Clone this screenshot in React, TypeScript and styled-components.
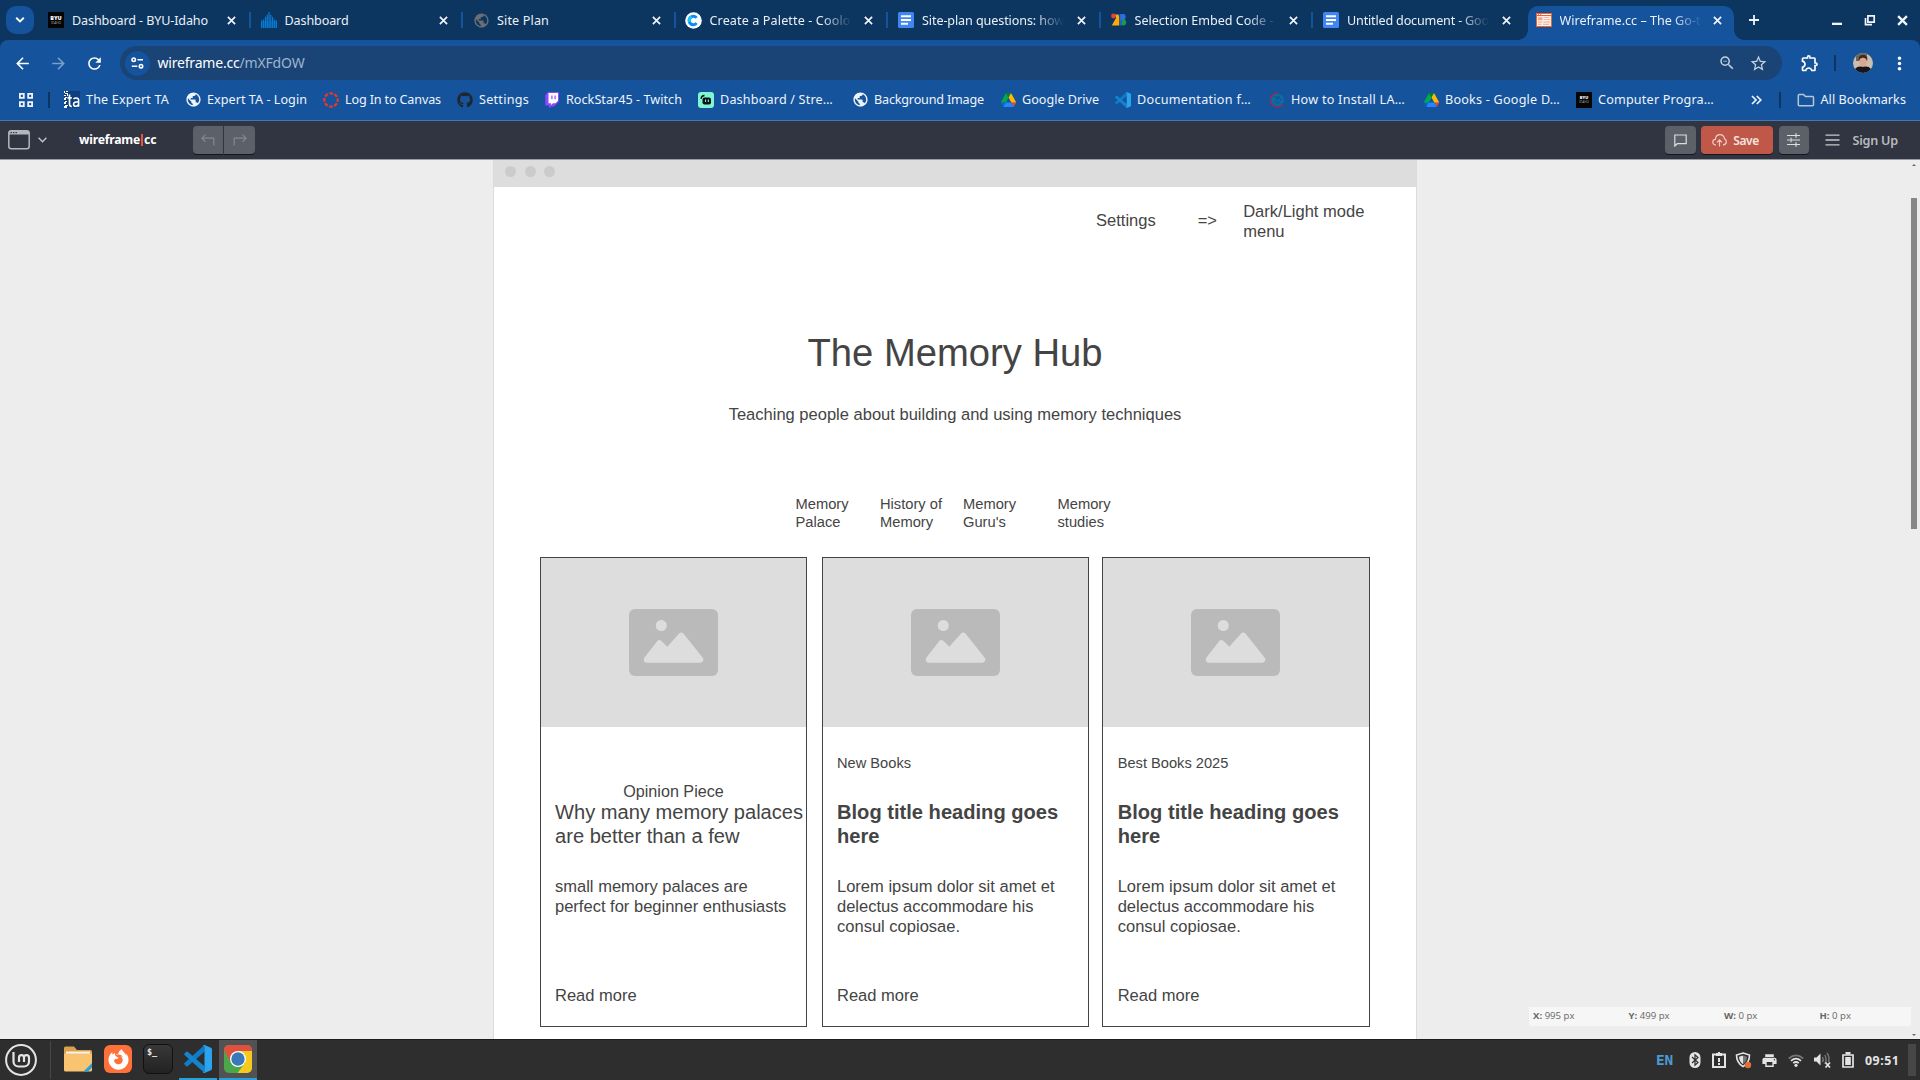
import React, { useLayoutEffect, useRef, useState } from "react";
import styled, { createGlobalStyle, css } from "styled-components";
import {
  MdArrowBack,
  MdArrowForward,
  MdRefresh,
  MdMoreVert,
  MdStarBorder,
  MdOutlineZoomOut,
  MdOutlineExtension,
  MdPublic,
  MdPrint,
} from "react-icons/md";
import { FaGithub, FaFirefoxBrowser } from "react-icons/fa";

const ui = `"Noto Sans", "Open Sans", sans-serif`;
const wire = `"Liberation Sans", Arial, sans-serif`;

const Global = createGlobalStyle`
  * { box-sizing: border-box; }
  body { margin: 0; overflow: hidden; background: #ededed; font-family: ${ui}; }
  svg { display: block; flex: none; }
`;

const Screen = styled.div`
  width: 1920px;
  height: 1080px;
  display: flex;
  flex-direction: column;
  overflow: hidden;
  background: #0c3560;
`;

/* ---------- text fitted to its label width ---------- */

const FitSpan = styled.span`
  display: inline-block;
  white-space: pre;
  flex: none;
`;

function Fit({ w, children }: { w: number; children: string }) {
  const ref = useRef<HTMLSpanElement>(null);
  const [spacing, setSpacing] = useState(0);
  useLayoutEffect(() => {
    const el = ref.current;
    if (!el) return;
    el.style.letterSpacing = "0px";
    const natural = el.getBoundingClientRect().width;
    const next = (w - natural) / children.length;
    el.style.letterSpacing = `${next}px`;
    setSpacing(next);
  }, [w, children]);
  return (
    <FitSpan ref={ref} style={{ letterSpacing: spacing }}>
      {children}
    </FitSpan>
  );
}

/* ---------- favicons ---------- */

const ByuBox = styled.span<{ $small?: boolean }>`
  width: 16px;
  height: 16px;
  background: #050505;
  color: #fff;
  display: flex;
  flex-direction: column;
  align-items: center;
  justify-content: center;
  font: 800 ${(p) => (p.$small ? 4 : 5.4)}px/5px "Open Sans", sans-serif;
  flex: none;
`;
const ByuSub = styled.span`
  font-size: 3.2px;
  line-height: 4px;
  font-weight: 400;
  color: #aaa;
`;
const Byu = ({ small }: { small?: boolean }) => (
  <ByuBox $small={small}>
    BYU<ByuSub>IDAHO</ByuSub>
  </ByuBox>
);

const Bars = () => (
  <svg width="16" height="16" viewBox="0 0 16 16" fill="#0a7ad1">
    <path d="M0 8.500h1.200V16H0zM1.900 7.500h1.300V16H1.900zM3.900 4.800h1.300V16H3.900zM5.700 2.800h1.200V16H5.700zM7.400 0h1.300v16H7.400zM9.200 2.800h1.200V16H9.200zM11 4.800h1.200V16H11zM12.900 7.500h1.200V16h-1.200zM14.800 8.500H16V16h-1.200z" />
    <path d="M0 9h16v7H0z" opacity=".35" />
  </svg>
);

const Coolors = () => (
  <svg width="17" height="17" viewBox="0 0 17 17">
    <circle cx="8.500" cy="8.500" r="8.300" fill="#fff" />
    <path d="M11.600 5.900a4.200 4.200 0 1 0 0 5.200" fill="none" stroke="#0c8bf5" strokeWidth="3" />
    <path d="M4.600 10a4.200 4.200 0 0 1 2-5.200" fill="none" stroke="#1cc4f7" strokeWidth="3" />
  </svg>
);

const Docs = () => (
  <svg width="16" height="16" viewBox="0 0 16 16">
    <rect width="16" height="16" rx="1.500" fill="#4285f4" />
    <path d="M3 3.200h10v2H3zM3 7h10v2H3zM3 10.800h7v2H3z" fill="#fff" />
  </svg>
);

const Selection = () => (
  <svg width="16" height="16" viewBox="0 0 16 16">
    <circle cx="2.500" cy="4" r="2.400" fill="#ea4335" />
    <path d="M4.500 2.500H8.300V13.500H.8L5 6z" fill="#fbab0c" />
    <path d="M9 2h4q2.500 1 1.300 5L13.500 8H9z" fill="#2b6fe0" />
    <path d="M6.800 1.800h2.400V6.500z" fill="#174ea6" />
    <circle cx="12.200" cy="10.600" r="3" fill="#169c46" />
    <path d="M9 8h1.800v5.500H9z" fill="#1c5fd0" />
  </svg>
);

const WireFav = () => (
  <svg width="16" height="14" viewBox="0 0 16 14">
    <path d="M0 0h16v14H0z" fill="#f2602c" />
    <path d="M1 1h1.200v1H1zM3 1h1.200v1H3zM5.200 1H15v1H5.200z" fill="#fff" />
    <path d="M1 3h14v10H1z" fill="#fdf3ee" />
    <path d="M2 4.200h4.500v3H2zM7.500 4.200H13v.9H7.500zM7.500 6.200H14v.9H7.500zM2 8.600h4.500v.9H2zM7.500 8.600H14v.9H7.500zM2 10.800h3.500v.9H2zM7 10.800h6v.9H7z" fill="#f7a384" />
  </svg>
);

const Ta = () => (
  <svg width="16" height="17" viewBox="0 0 16 17">
    <path d="M0 0h16v17H0z" fill="#0d3f7c" />
    <path d="M0 0h1v2H0zM2 0h2v1H2zM1 2h3v1H1zM0 4h2v1H0zM3 3h1v2H3zM1 6h2v1H1zM0 7h2v2H0zM1 10h2v1H1zM0 11h2v2H0zM1 14h3v1H1zM0 15h3v2H0z" fill="#fff" />
    <path d="M5.500 3.500V13q0 2.600 2.300 2.300M3.500 6.800h4.300" fill="none" stroke="#fff" strokeWidth="1.700" />
    <path d="M9.500 7.900q1-.9 2.700-.9 2.400 0 2.400 2.200v6.600M14 10.800q-4.400 0-4.400 2.500 0 2 1.900 2 1.700 0 2.500-1.500" fill="none" stroke="#fff" strokeWidth="1.600" />
  </svg>
);

const Canvas = () => (
  <svg width="16" height="16" viewBox="0 0 16 16">
    <circle cx="8" cy="8" r="6.700" fill="none" stroke="#e8382b" strokeWidth="2.300" strokeDasharray="3.760 1.500" strokeDashoffset="1.880" />
  </svg>
);

const Twitch = () => (
  <svg width="16" height="16" viewBox="0 0 16 16">
    <path d="M4 0h11v9.500l-5 5H7.500L5 16v-2.500H1.300V3z" fill="#9146ff" />
    <path d="M4.500 1H14v7.800l-2.500 2.500H9L7 13v-1.700H4.500z" fill="#fff" />
    <path d="M7.300 3.500h1.200v3.700H7.300zM10.500 3.500h1.200v3.700h-1.200z" fill="#9146ff" />
  </svg>
);

const Stream = () => (
  <svg width="16" height="16" viewBox="0 0 16 16">
    <rect width="16" height="16" rx="3" fill="#80f5d2" />
    <path d="M3 6.800a3.800 3.800 0 0 1 3.500-3.300" fill="none" stroke="#081018" strokeWidth="1.300" />
    <rect x="4.500" y="5.500" width="8.500" height="7" rx="2" fill="#081018" />
    <path d="M7 7.500h1.100v2.500H7zM9.800 7.500h1.100v2.500H9.800z" fill="#80f5d2" />
  </svg>
);

const Drive = () => (
  <svg width="15" height="14" viewBox="0 0 87 78" preserveAspectRatio="none">
    <path d="m6.600 66.850 3.850 6.650c.8 1.400 1.950 2.500 3.300 3.300L27.500 53H0c0 1.550.4 3.100 1.200 4.500z" fill="#0066da" />
    <path d="M43.650 25 29.900 1.200c-1.350.8-2.500 1.900-3.300 3.300L1.200 48.500A9 9 0 0 0 0 53h27.500z" fill="#00ac47" />
    <path d="M73.550 76.800c1.350-.8 2.500-1.900 3.300-3.300L86.100 57.500c.8-1.400 1.200-2.950 1.200-4.500H59.800z" fill="#ea4335" />
    <path d="M43.650 25 57.400 1.200C56.050.4 54.500 0 52.900 0H34.400c-1.600 0-3.150.45-4.500 1.200z" fill="#00832d" />
    <path d="M59.800 53H27.500L13.750 76.800c1.350.8 2.900 1.200 4.500 1.200h50.800c1.600 0 3.150-.45 4.500-1.200z" fill="#2684fc" />
    <path d="M73.400 26.500 60.700 4.500c-.8-1.400-1.950-2.500-3.300-3.300L43.650 25 59.800 53h27.450c0-1.550-.4-3.100-1.200-4.500z" fill="#ffba00" />
  </svg>
);

const Code = ({ size = 16 }: { size?: number }) => (
  <svg width={size} height={size} viewBox="0 0 28 28">
    <path d="M20.500 6.800 3.700 21.300q-.7.600-1.400 0L.5 19.600q-.7-.8 0-1.500L20.500 0z" fill="#0e7cc8" />
    <path d="M20.500 21.200 3.700 6.700q-.7-.6-1.400 0L.5 8.400q-.7.800 0 1.500L20.500 28z" fill="#1484cf" />
    <path d="M20.500 0 26.900 2.800Q28 3.300 28 4.500v19q0 1.200-1.100 1.700L20.500 28q-1.200.2-1.700-.8.900.5 1.700-.6V1.400q-.8-1.100-1.700-.6.500-1 1.700-.8z" fill="#2ba4f0" />
  </svg>
);

const Install = () => (
  <svg width="16" height="16" viewBox="0 0 16 16">
    <circle cx="8.600" cy="7.800" r="6.300" fill="#0d6ba6" />
    <path d="M9.500 1.200A7 7 0 0 0 1.300 7.500Q1.300 14.500 8 14.700q3.800 0 6-2.500" fill="none" stroke="#b3243f" strokeWidth="1.100" />
    <path d="M5 5q4-1 8 3M5.500 10.500 11 3.500M7 12q3-1 4.500-3.500" fill="none" stroke="#0b5488" strokeWidth="1" />
  </svg>
);

/* ---------- tab strip ---------- */

const TabStrip = styled.div`
  height: 40px;
  flex: none;
  background: #0c3560;
  display: flex;
  padding-left: 6px;
  color: #e9f0f8;
  font-size: 12.6px;
`;
const TabSearch = styled.div`
  width: 28px;
  height: 28px;
  margin: 6px 4px 0 0;
  border-radius: 10px;
  background: #15539c;
  display: flex;
  align-items: center;
  justify-content: center;
  flex: none;
`;
const activeTab = css`
  width: 206px;
  margin: 6px 0 0 2px;
  padding: 0 0 6px 8px;
  height: 34px;
  border-radius: 10px 10px 0 0;
  background: #15539c;
  &::before,
  &::after {
    content: "";
    position: absolute;
    bottom: 0;
    width: 10px;
    height: 10px;
  }
  &::before {
    left: -10px;
    background: radial-gradient(circle at 0 0, transparent 9.5px, #15539c 10px);
  }
  &::after {
    right: -10px;
    background: radial-gradient(circle at 100% 0, transparent 9.5px, #15539c 10px);
  }
`;
const Tab = styled.div<{ $active?: boolean }>`
  width: 212.5px;
  height: 40px;
  flex: none;
  display: flex;
  align-items: center;
  position: relative;
  padding-left: 10px;
  ${(p) => p.$active && activeTab}
`;
const TabIcon = styled.span`
  width: 16px;
  display: flex;
  justify-content: center;
  flex: none;
`;
const TabTitle = styled.span<{ $fade?: boolean }>`
  width: 142px;
  margin-left: 8px;
  white-space: nowrap;
  line-height: 20px;
  padding-top: 1px;
  flex: none;
  ${(p) => p.$fade && "mask-image: linear-gradient(90deg, #000 112px, transparent 142px);"}
`;
const TabClose = styled.span<{ $active?: boolean }>`
  margin-left: ${(p) => (p.$active ? 11 : 12.5)}px;
  display: flex;
`;
const TabSep = styled.span<{ $hidden?: boolean }>`
  margin-left: auto;
  width: 2px;
  height: 16px;
  background: ${(p) => (p.$hidden ? "transparent" : "#15539c")};
`;
const Cross = ({ s = 9, w = 1.9 }: { s?: number; w?: number }) => (
  <svg width={s} height={s} viewBox="0 0 10 10" stroke="#f2f6fb" strokeWidth={w}>
    <path d="M1 1l8 8M9 1l-8 8" />
  </svg>
);
const NewTab = styled.span`
  display: flex;
  align-items: center;
  height: 40px;
  margin-left: 14px;
`;
const WindowButtons = styled.span`
  display: flex;
  align-items: center;
  height: 40px;
  margin-left: auto;
  padding-right: 12px;
  gap: 21px;
`;

type TabData = { icon: React.ReactNode; title: string; w: number; fade?: boolean; last?: boolean; active?: boolean };
const tabs: TabData[] = [
  { icon: <Byu />, title: "Dashboard - BYU-Idaho", w: 136 },
  { icon: <Bars />, title: "Dashboard", w: 64 },
  { icon: <MdPublic size={17} color="#6b6f75" />, title: "Site Plan", w: 52 },
  { icon: <Coolors />, title: "Create a Palette - Coolo", w: 141, fade: true },
  { icon: <Docs />, title: "Site-plan questions: how", w: 142, fade: true },
  { icon: <Selection />, title: "Selection Embed Code -", w: 139, fade: true },
  { icon: <Docs />, title: "Untitled document - Goo", w: 142, fade: true, last: true },
  { icon: <WireFav />, title: "Wireframe.cc – The Go-t", w: 141, fade: true, active: true },
];

/* ---------- address row ---------- */

const AddressRow = styled.div`
  height: 42px;
  flex: none;
  background: #15539c;
  border-radius: 8px 8px 0 0;
  display: flex;
  align-items: center;
  padding: 4px 12px 0 12.5px;
  color: #fff;
`;
const NavButtons = styled.div`
  width: 107.5px;
  display: flex;
  gap: 17px;
  flex: none;
`;
const Omnibox = styled.div`
  width: 1662px;
  height: 34px;
  border-radius: 17px;
  background: #194475;
  display: flex;
  align-items: center;
  padding: 0 14px 0 4.5px;
  font-size: 14px;
  flex: none;
`;
const SiteInfo = styled.span`
  width: 25px;
  height: 25px;
  border-radius: 50%;
  background: #15539c;
  display: flex;
  align-items: center;
  justify-content: center;
  margin-right: 8px;
`;
const Url = styled.span`
  display: flex;
  padding-bottom: 1px;
`;
const Path = styled.span`
  color: #9fb4cf;
`;
const OmniIcons = styled.span`
  margin-left: auto;
  display: flex;
  align-items: center;
  gap: 13.5px;
  color: #c6d0dc;
`;
const AddressTail = styled.span`
  display: flex;
  align-items: center;
  margin-left: 18px;
`;
const DarkSep = styled.span<{ $l: number; $r: number }>`
  width: 1.5px;
  height: 16px;
  margin: 0 ${(p) => p.$r}px 0 ${(p) => p.$l}px;
  background: #0c3560;
  flex: none;
`;
const MenuDots = styled.span`
  margin-left: 16px;
  display: flex;
`;

/* ---------- bookmarks ---------- */

const BookmarkRow = styled.div`
  height: 39px;
  flex: none;
  background: #15539c;
  display: flex;
  align-items: center;
  padding: 0 13px 3px 19px;
  color: #eef4fb;
  font-size: 12.6px;
  line-height: 20px;
  border-bottom: 1px solid #4478b0;
`;
const Bookmark = styled.span<{ $slot: number }>`
  width: ${(p) => p.$slot}px;
  display: flex;
  align-items: center;
  gap: 6px;
  flex: none;
`;
const BookmarkIcon = styled.span`
  width: 16px;
  display: flex;
  justify-content: center;
`;
const BookmarkText = styled.span`
  padding-top: 1px;
`;
const AllBookmarks = styled.span`
  display: flex;
  align-items: center;
  gap: 6px;
`;
const MoreMarks = styled.span`
  width: 12px;
  margin-left: 21px;
  display: flex;
`;

const bookmarks: [React.ReactNode, string, number, number][] = [
  [<Ta />, "The Expert TA", 83, 121],
  [<MdPublic size={17} />, "Expert TA - Login", 100, 138],
  [<Canvas />, "Log In to Canvas", 96, 134],
  [<FaGithub size={16} color="#20262e" />, "Settings", 50, 87],
  [<Twitch />, "RockStar45 - Twitch", 116, 154],
  [<Stream />, "Dashboard / Stre…", 113, 154],
  [<MdPublic size={17} />, "Background Image", 110, 148],
  [<Drive />, "Google Drive", 77, 115],
  [<Code />, "Documentation f…", 114, 154],
  [<Install />, "How to Install LA…", 114, 154],
  [<Drive />, "Books - Google D…", 115, 153],
  [<Byu small />, "Computer Progra…", 116, 154],
];

/* ---------- editor header ---------- */

const EditorBar = styled.div`
  height: 39px;
  flex: none;
  background: #303541;
  border-bottom: 1px solid #9a9ca4;
  display: flex;
  align-items: center;
  padding: 0 22px 0 8px;
  color: #fff;
`;
const Brand = styled.span`
  margin-left: 32px;
  width: 114px;
  display: flex;
  align-items: center;
  font-weight: 700;
  font-size: 12.2px;
  padding-bottom: 1px;
`;
const BrandCursor = styled.span`
  width: 2px;
  height: 12px;
  background: #e8543c;
  margin: 0 1px;
`;
const ChevronBox = styled.span`
  margin-left: 8px;
`;
const EditorButton = styled.span<{ $w: number; $red?: boolean; $r?: string; $ml?: number }>`
  width: ${(p) => p.$w}px;
  height: 28px;
  margin-left: ${(p) => p.$ml ?? 0}px;
  border-radius: ${(p) => p.$r ?? "4px"};
  background: ${(p) => (p.$red ? "#bf5848" : "#5c6068")};
  box-shadow: 0 1px 0 #14161b;
  display: flex;
  align-items: center;
  justify-content: center;
  gap: 6px;
  padding-right: ${(p) => (p.$red ? 2 : 0)}px;
  font-size: 12px;
  font-weight: 600;
  color: #f5e4e1;
`;
const EditorRight = styled.span`
  margin-left: auto;
  display: flex;
  align-items: center;
  color: #b9bbbe;
  font-weight: 600;
  font-size: 12.6px;
`;
const Burger = styled.span`
  margin: 0 13px 0 16px;
`;

/* ---------- workspace ---------- */

const Workspace = styled.div`
  height: 879px;
  flex: none;
  background: #ededed;
  display: flex;
  overflow: hidden;
  position: relative;
`;
const Page = styled.div`
  width: 924px;
  height: 900px;
  margin-left: 493px;
  background: #fff;
  border: solid #dcdcdc;
  border-width: 0 1px;
  color: #444;
  font-family: ${wire};
  font-size: 16.53px;
  line-height: 19.8px;
  flex: none;
`;
const PageBar = styled.div`
  height: 27px;
  background: #ddd;
  display: flex;
  gap: 8.5px;
  padding: 6px 0 0 11px;
`;
const Dot = styled.span`
  width: 11px;
  height: 11px;
  border-radius: 50%;
  background: #cbcbcb;
`;
const SettingsRow = styled.div`
  display: flex;
  align-items: center;
  margin-top: 15px;
  padding-left: 602px;
  height: 40px;
`;
const SettingsLabel = styled.span`
  padding-bottom: 2px;
`;
const Arrow = styled(SettingsLabel)`
  margin-left: 42px;
  width: 45.5px;
`;
const ModeMenu = styled.span`
  width: 130px;
`;
const Title = styled.h1`
  margin: 87.5px 0 0;
  text-align: center;
  font-weight: 400;
  font-size: 38.2px;
  line-height: 46px;
`;
const Subtitle = styled.p`
  margin: 29px 0 0;
  text-align: center;
`;
const TopicNav = styled.nav`
  display: grid;
  grid-template-columns: 84.5px 83px 94.5px 80px;
  padding-left: 301.5px;
  margin-top: 71.5px;
  font-size: 14.7px;
  line-height: 17.82px;
`;
const Topic = styled.span`
  max-width: 66px;
`;
const Cards = styled.div`
  display: flex;
  padding-left: 46px;
  margin-top: 25.5px;
`;
const Card = styled.article<{ $w: number; $gap: number }>`
  width: ${(p) => p.$w}px;
  height: 470px;
  margin-right: ${(p) => p.$gap}px;
  border: 1px solid #444;
  flex: none;
  display: flex;
  flex-direction: column;
`;
const CardImage = styled.div<{ $nudge?: boolean }>`
  height: 169px;
  background: #ddd;
  display: flex;
  align-items: center;
  justify-content: center;
  padding-right: ${(p) => (p.$nudge ? 1 : 0)}px;
  flex: none;
`;
const CardBody = styled.div<{ $inset: number }>`
  padding-left: ${(p) => p.$inset}px;
`;
const Tag = styled.div<{ $inset: number; $feature?: boolean }>`
  height: 73px;
  padding-top: ${(p) => (p.$feature ? 55 : 28)}px;
  ${(p) =>
    p.$feature
      ? css`
          margin-left: -${p.$inset}px;
          text-align: center;
          font-size: 16.15px;
        `
      : css`
          font-size: 14.65px;
          line-height: 17.82px;
        `}
`;
const CardTitle = styled.h2<{ $feature?: boolean }>`
  margin: 0;
  height: 77px;
  font-size: 20.12px;
  line-height: 24px;
  font-weight: ${(p) => (p.$feature ? 400 : 700)};
`;
const CardText = styled.p`
  margin: 0;
  width: 236px;
  height: 109px;
`;
const PlaceholderIcon = () => (
  <svg width="89" height="67" viewBox="0 0 89 67">
    <rect width="89" height="67" rx="6" fill="#bababa" />
    <circle cx="32.300" cy="16.500" r="5.500" fill="#ddd" />
    <path d="M18 50.500 30.500 34.500 38.500 42.500 52.300 27 71 50.500z" fill="#ddd" stroke="#ddd" strokeWidth="6.500" strokeLinejoin="round" />
  </svg>
);

type CardData = { w: number; gap: number; inset: number; tag: string; title: string; text: string; feature?: boolean; nudge?: boolean };
const lorem = "Lorem ipsum dolor sit amet et delectus accommodare his consul copiosae.";
const cards: CardData[] = [
  {
    w: 267,
    gap: 15,
    inset: 14,
    tag: "Opinion Piece",
    title: "Why many memory palaces are better than a few",
    text: "small memory palaces are perfect for beginner enthusiasts",
    feature: true,
  },
  { w: 267, gap: 13, inset: 14, tag: "New Books", title: "Blog title heading goes here", text: lorem },
  { w: 268, gap: 0, inset: 14.7, tag: "Best Books 2025", title: "Blog title heading goes here", text: lorem, nudge: true },
];

const Scroll = styled.div`
  margin-left: auto;
  width: 10px;
  display: flex;
  flex-direction: column;
  align-items: center;
  padding: 4px 2px 3px 0;
`;
const Thumb = styled.span`
  width: 6px;
  height: 331px;
  background: #878787;
  margin: 32px 0 auto;
`;
const Readout = styled.div`
  position: absolute;
  right: 9px;
  bottom: 13px;
  width: 382px;
  height: 19px;
  background: #f6f6f6;
  display: grid;
  grid-template-columns: repeat(4, 95.5px);
  padding-left: 4px;
  font: 9.6px/18px "Open Sans", sans-serif;
  color: #666;
`;

/* ---------- taskbar ---------- */

const Taskbar = styled.div`
  height: 41px;
  flex: none;
  background: #2e2e2e;
  border-top: 1px solid #1c1c1c;
  display: flex;
  align-items: center;
  padding: 0 4px 0 5px;
`;
const TaskSep = styled.span`
  width: 1px;
  height: 38px;
  background: #484848;
  margin: 0 8px 0 13px;
`;
const Task = styled.span<{ $run?: boolean; $active?: boolean }>`
  width: 38px;
  height: 40px;
  margin-right: 2px;
  display: flex;
  align-items: center;
  justify-content: center;
  padding-bottom: 2px;
  background: ${(p) => (p.$active ? "#525252" : "transparent")};
  box-shadow: ${(p) => (p.$run ? "inset 0 -2px 0 #2a9fd8" : "none")};
`;
const FirefoxTile = styled.span`
  width: 28px;
  height: 28px;
  border-radius: 6px;
  background: #ff7139;
  display: flex;
  align-items: center;
  justify-content: center;
`;
const TerminalTile = styled.span`
  width: 30px;
  height: 30px;
  border-radius: 6px;
  background: linear-gradient(#383838, #222);
  border: 1.5px solid #111;
  color: #eee;
  font: 700 8.5px/11px "DejaVu Sans Mono", monospace;
  padding: 2px 0 0 3px;
`;
const Tray = styled.span`
  margin-left: auto;
  display: flex;
  align-items: center;
  color: #e4e4e4;
`;
const Lang = styled.span`
  font: 700 14.5px/20px "DejaVu Sans Mono", monospace;
  color: #4b9bd5;
  margin-right: 10px;
`;
const TrayIcon = styled.span<{ $w: number }>`
  width: ${(p) => p.$w}px;
  display: flex;
  justify-content: center;
`;
const Clock = styled.span`
  font: 700 12.4px/20px "Noto Sans", sans-serif;
  margin-left: 5px;
  padding-top: 1px;
  width: 43px;
`;
const ShowDesktop = styled.span`
  width: 8px;
  height: 32px;
  background: #464646;
`;

export default function App() {
  return (
    <>
      <Global />
      <Screen>
        <TabStrip>
          <TabSearch>
            <svg width="10" height="6" viewBox="0 0 10 6" fill="none" stroke="#fff" strokeWidth="1.900">
              <path d="M1.200 .8 5 4.500 8.800 .8" />
            </svg>
          </TabSearch>
          {tabs.map((t) => (
            <Tab key={t.title} $active={t.active}>
              <TabIcon>{t.icon}</TabIcon>
              <TabTitle $fade={t.fade}>
                <Fit w={t.w}>{t.title}</Fit>
              </TabTitle>
              <TabClose $active={t.active}>
                <Cross />
              </TabClose>
              {!t.active && <TabSep $hidden={t.last} />}
            </Tab>
          ))}
          <NewTab>
            <svg width="12" height="12" viewBox="0 0 12 12" stroke="#eef4fb" strokeWidth="1.800">
              <path d="M6 1v10M1 6h10" />
            </svg>
          </NewTab>
          <WindowButtons>
            <svg width="12" height="12" viewBox="0 0 12 12">
              <path d="M1 8.700h10v2.300H1z" fill="#f2f6fb" />
            </svg>
            <svg width="12" height="12" viewBox="0 0 12 12" fill="none" stroke="#f2f6fb" strokeWidth="1.700">
              <path d="M3.900 1.900h6.300v6.300H3.900zM1.500 4v6.600H8" />
            </svg>
            <Cross s={11} w={2.1} />
          </WindowButtons>
        </TabStrip>

        <AddressRow>
          <NavButtons>
            <MdArrowBack size={19} />
            <MdArrowForward size={19} color="#7a9fcb" />
            <MdRefresh size={19} />
          </NavButtons>
          <Omnibox>
            <SiteInfo>
              <svg width="13" height="12" viewBox="0 0 13 12" fill="none" stroke="#fff" strokeWidth="1.600">
                <circle cx="2.700" cy="2.700" r="1.700" />
                <circle cx="10" cy="9.200" r="1.700" />
                <path d="M6.500 2.700h5.500M.8 9.200h5.500" />
              </svg>
            </SiteInfo>
            <Url>
              <Fit w={82}>wireframe.cc</Fit>
              <Path>
                <Fit w={65}>/mXFdOW</Fit>
              </Path>
            </Url>
            <OmniIcons>
              <MdOutlineZoomOut size={18} />
              <MdStarBorder size={19} />
            </OmniIcons>
          </Omnibox>
          <AddressTail>
            <MdOutlineExtension size={20} />
            <DarkSep $l={14} $r={17} />
            <svg width="20" height="20" viewBox="0 0 20 20">
              <clipPath id="face">
                <circle cx="10" cy="10" r="10" />
              </clipPath>
              <g clipPath="url(#face)">
                <path d="M0 0h20v20H0z" fill="#c9bfae" />
                <path d="M3 0h11v8H3z" fill="#6e6458" />
                <path d="M1 20q0-6 6-6.500h6q6 .5 6 6.500z" fill="#15151a" />
                <ellipse cx="10" cy="8.500" rx="3.700" ry="5.200" fill="#dca78e" />
                <path d="M5.700 7.500Q5 2 10 2t4.300 5.500Q13 4.600 10 4.800 7 4.600 5.700 7.500z" fill="#3a2920" />
              </g>
            </svg>
            <MenuDots>
              <MdMoreVert size={21} />
            </MenuDots>
          </AddressTail>
        </AddressRow>

        <BookmarkRow>
          <svg width="14" height="14" viewBox="0 0 14 14" fill="none" stroke="#eef4fb" strokeWidth="1.800">
            <path d="M.9.900h3.900v3.900H.9zM9.200.900h3.900v3.900H9.200zM.9 9.200h3.900v3.900H.9zM9.200 9.200h3.900v3.900H9.200z" />
          </svg>
          <DarkSep $l={15} $r={14.5} />
          {bookmarks.map(([icon, text, w, slot]) => (
            <Bookmark key={text} $slot={slot}>
              <BookmarkIcon>{icon}</BookmarkIcon>
              <BookmarkText>
                <Fit w={w}>{text}</Fit>
              </BookmarkText>
            </Bookmark>
          ))}
          <MoreMarks>
            <svg width="11" height="10" viewBox="0 0 11 10" fill="none" stroke="#eef4fb" strokeWidth="1.700">
              <path d="M1 1l4 4-4 4M5.800 1l4 4-4 4" />
            </svg>
          </MoreMarks>
          <DarkSep $l={16} $r={16} />
          <AllBookmarks>
            <svg width="18" height="14" viewBox="0 0 18 14" fill="none" stroke="#b9c6d6" strokeWidth="1.500">
              <path d="M1.300 11.800V2.500q0-1 1-1h4.200l2 2h7q1 0 1 1v7.300q0 1-1 1H2.300q-1 0-1-1z" />
            </svg>
            <BookmarkText>
              <Fit w={85.5}>All Bookmarks</Fit>
            </BookmarkText>
          </AllBookmarks>
        </BookmarkRow>

        <EditorBar>
          <svg width="22" height="20" viewBox="0 0 22 20">
            <rect x=".8" y=".8" width="20.400" height="18" rx="2.500" fill="none" stroke="#b4b6bb" strokeWidth="1.500" />
            <path d="M1 1h20v3.500H1z" fill="#b4b6bb" />
            <path d="M2.500 2h1.400v1.200H2.500zM5 2h1.400v1.200H5zM7.500 2h1.400v1.200H7.500z" fill="#303541" />
          </svg>
          <ChevronBox>
            <svg width="9" height="6" viewBox="0 0 9 6" fill="none" stroke="#c6c8cc" strokeWidth="1.300">
              <path d="M.6.800 4.500 4.800 8.400.8" />
            </svg>
          </ChevronBox>
          <Brand>
            <Fit w={61}>wireframe</Fit>
            <BrandCursor />
            <Fit w={12.5}>cc</Fit>
          </Brand>
          <EditorButton $w={30} $r="4px 0 0 4px">
            <svg width="14" height="12" viewBox="0 0 14 12" fill="none" stroke="#85888e" strokeWidth="1.200">
              <path d="M4.500.6.900 4.200l3.600 3.600M1 4.200h11.800V11.500" />
            </svg>
          </EditorButton>
          <EditorButton $w={31} $r="0 4px 4px 0" $ml={1}>
            <svg width="14" height="12" viewBox="0 0 14 12" fill="none" stroke="#85888e" strokeWidth="1.200">
              <path d="M9.500.6l3.600 3.600-3.600 3.600M13 4.200H1.200V11.500" />
            </svg>
          </EditorButton>
          <EditorRight>
            <EditorButton $w={31}>
              <svg width="13" height="13" viewBox="0 0 13 13" fill="none" stroke="#dcdde0" strokeWidth="1.200">
                <path d="M.8 12V1h11.400v8.700H3.300z" />
              </svg>
            </EditorButton>
            <EditorButton $w={72} $red $ml={5}>
              <svg width="15" height="13" viewBox="0 0 15 13" fill="none" stroke="#f0cfc9" strokeWidth="1.200">
                <path d="M4 10.800Q.8 10.800.8 8q0-2.300 2.600-2.600Q3.800.7 8 .7q3.800 0 4.500 4.200 1.900.7 1.800 3-.1 2.800-3.300 2.900M7.500 12.500V6M5 8.300 7.500 5.800 10 8.300" />
              </svg>
              <Fit w={25.5}>Save</Fit>
            </EditorButton>
            <EditorButton $w={30} $ml={6}>
              <svg width="13" height="14" viewBox="0 0 13 14" fill="none" stroke="#dcdde0" strokeWidth="1.200">
                <path d="M0 2.500h13M0 7h3M4 7h9M0 11.500h13M9 .3v4.400M4 4.800v4.400M9 9.300v4.400" />
              </svg>
            </EditorButton>
            <Burger>
              <svg width="15" height="12" viewBox="0 0 15 12" stroke="#c6c8cc" strokeWidth="1.300">
                <path d="M.5 1.200h14M.5 6h14M.5 10.800h14" />
              </svg>
            </Burger>
            <Fit w={45.5}>Sign Up</Fit>
          </EditorRight>
        </EditorBar>

        <Workspace>
          <Page>
            <PageBar>
              <Dot />
              <Dot />
              <Dot />
            </PageBar>
            <SettingsRow>
              <SettingsLabel>Settings</SettingsLabel>
              <Arrow>=&gt;</Arrow>
              <ModeMenu>Dark/Light mode menu</ModeMenu>
            </SettingsRow>
            <Title>The Memory Hub</Title>
            <Subtitle>Teaching people about building and using memory techniques</Subtitle>
            <TopicNav>
              <Topic>Memory Palace</Topic>
              <Topic>History of Memory</Topic>
              <Topic>Memory Guru's</Topic>
              <Topic>Memory studies</Topic>
            </TopicNav>
            <Cards>
              {cards.map((c) => (
                <Card key={c.tag} $w={c.w} $gap={c.gap}>
                  <CardImage $nudge={c.nudge}>
                    <PlaceholderIcon />
                  </CardImage>
                  <CardBody $inset={c.inset}>
                    <Tag $inset={c.inset} $feature={c.feature}>
                      {c.tag}
                    </Tag>
                    <CardTitle $feature={c.feature}>{c.title}</CardTitle>
                    <CardText>{c.text}</CardText>
                    Read more
                  </CardBody>
                </Card>
              ))}
            </Cards>
          </Page>
          <Scroll>
            <svg width="4" height="2" viewBox="0 0 4 2">
              <path d="M0 2 2 0l2 2z" fill="#666" />
            </svg>
            <Thumb />
            <svg width="4" height="2" viewBox="0 0 4 2">
              <path d="M0 0h4L2 2z" fill="#666" />
            </svg>
          </Scroll>
          <Readout>
            <span><b>X:</b> 995 px</span>
            <span><b>Y:</b> 499 px</span>
            <span><b>W:</b> 0 px</span>
            <span><b>H:</b> 0 px</span>
          </Readout>
        </Workspace>

        <Taskbar>
          <svg width="32" height="32" viewBox="0 0 32 32" fill="none" stroke="#e4e4e4">
            <circle cx="16" cy="16" r="14.900" strokeWidth="2" />
            <path d="M8.500 8v9.500a5 5 0 0 0 5 5h5.500a5 5 0 0 0 5-5V13.700a2.500 2.500 0 0 0-5 0v4.300M19 13.700a2.500 2.500 0 0 0-5 0v4.300" strokeWidth="2.200" />
          </svg>
          <TaskSep />
          <Task>
            <svg width="28" height="26" viewBox="0 0 28 26">
              <path d="M0 2q0-1.500 1.500-1.500h8.500L13 4h13.500Q28 4 28 5.500V12H0z" fill="#d9a24b" />
              <path d="M2 5.500h24V9H2z" fill="#f3f3f3" />
              <path d="M0 7.500h28V24q0 1.500-1.500 1.500h-25Q0 25.500 0 24z" fill="#f9c46f" />
              <path d="M28 17v4.500l-4 4H19.500z" fill="#2a9fd8" />
            </svg>
          </Task>
          <Task>
            <FirefoxTile>
              <FaFirefoxBrowser size={21} color="#fff" />
            </FirefoxTile>
          </Task>
          <Task>
            <TerminalTile>$_</TerminalTile>
          </Task>
          <Task $run>
            <Code size={28} />
          </Task>
          <Task $run $active>
            <svg width="28" height="28" viewBox="0 0 28 28">
              <clipPath id="tile">
                <rect width="28" height="28" rx="5" />
              </clipPath>
              <g clipPath="url(#tile)">
                <path d="M0 0h28v28H0z" fill="#4aa84a" />
                <path d="M0 0h28v6H14L6.500 17 0 5z" fill="#e0503f" />
                <path d="M14 6h14v22H13.500L21 18z" fill="#f6c91c" />
              </g>
              <circle cx="14" cy="14" r="8" fill="#fff" />
              <circle cx="14" cy="14" r="6.700" fill="#3a78b8" />
            </svg>
          </Task>
          <Tray>
            <Lang>
              <Fit w={17}>EN</Fit>
            </Lang>
            <TrayIcon $w={24}>
              <svg width="12" height="16" viewBox="0 0 12 16">
                <rect x=".5" width="11" height="16" rx="5.500" fill="#e4e4e4" />
                <path d="M3 5l6 5.500-3 2.700V2.800l3 2.700L3 11" fill="none" stroke="#2e2e2e" strokeWidth="1.200" />
              </svg>
            </TrayIcon>
            <TrayIcon $w={24}>
              <svg width="14" height="16" viewBox="0 0 14 16">
                <path d="M1 2.500h12V15H1z" fill="none" stroke="#e4e4e4" strokeWidth="2" />
                <path d="M4 1h2V0h2v1h2v3H4zM6 6h2v4H6zM6 11h2v2H6z" fill="#e4e4e4" />
              </svg>
            </TrayIcon>
            <TrayIcon $w={24}>
              <svg width="17" height="17" viewBox="0 0 17 17">
                <path d="M8 1 14.500 3q0 8-6.500 11.500Q1.500 11 1.500 3z" fill="none" stroke="#e4e4e4" strokeWidth="1.600" />
                <path d="M8 3.500 4 4.800q.2 5 4 7.500z" fill="#e4e4e4" />
                <path d="M8 3.500l4 1.300q-.2 5-4 7.500z" fill="#777" />
                <circle cx="13" cy="13" r="3.200" fill="#e0703a" />
              </svg>
            </TrayIcon>
            <TrayIcon $w={29}>
              <MdPrint size={17} />
            </TrayIcon>
            <TrayIcon $w={24}>
              <svg width="16" height="13" viewBox="0 0 16 13" fill="none">
                <path d="M.8 4.500Q8-1.800 15.200 4.500" stroke="#777" strokeWidth="1.800" />
                <path d="M3 6.900Q8 2.500 13 6.900M5.200 9.200Q8 6.800 10.800 9.200" stroke="#e4e4e4" strokeWidth="1.700" />
                <circle cx="8" cy="11.300" r="1.600" fill="#e4e4e4" />
              </svg>
            </TrayIcon>
            <TrayIcon $w={28}>
              <svg width="17" height="16" viewBox="0 0 17 16" fill="none">
                <path d="M0 5.500h2.500l4-4v12l-4-4H0z" fill="#e4e4e4" />
                <path d="M8.500 5q1.500 2.500 0 5M10.800 3q2.500 4.500 0 9M13 1q3 4.500 1.500 9" stroke="#777" strokeWidth="1.400" />
                <path d="M11.500 10.500l4.500 5M16 10.500l-4.500 5" stroke="#e4e4e4" strokeWidth="1.700" />
              </svg>
            </TrayIcon>
            <TrayIcon $w={24}>
              <svg width="12" height="16" viewBox="0 0 12 16">
                <path d="M1 3h10v12H1z" fill="none" stroke="#e4e4e4" strokeWidth="1.700" />
                <path d="M3.500 0h5v2.500h-5zM3.200 5h5.600v8H3.200z" fill="#e4e4e4" />
              </svg>
            </TrayIcon>
            <Clock>
              <Fit w={34.5}>09:51</Fit>
            </Clock>
            <ShowDesktop />
          </Tray>
        </Taskbar>
      </Screen>
    </>
  );
}
